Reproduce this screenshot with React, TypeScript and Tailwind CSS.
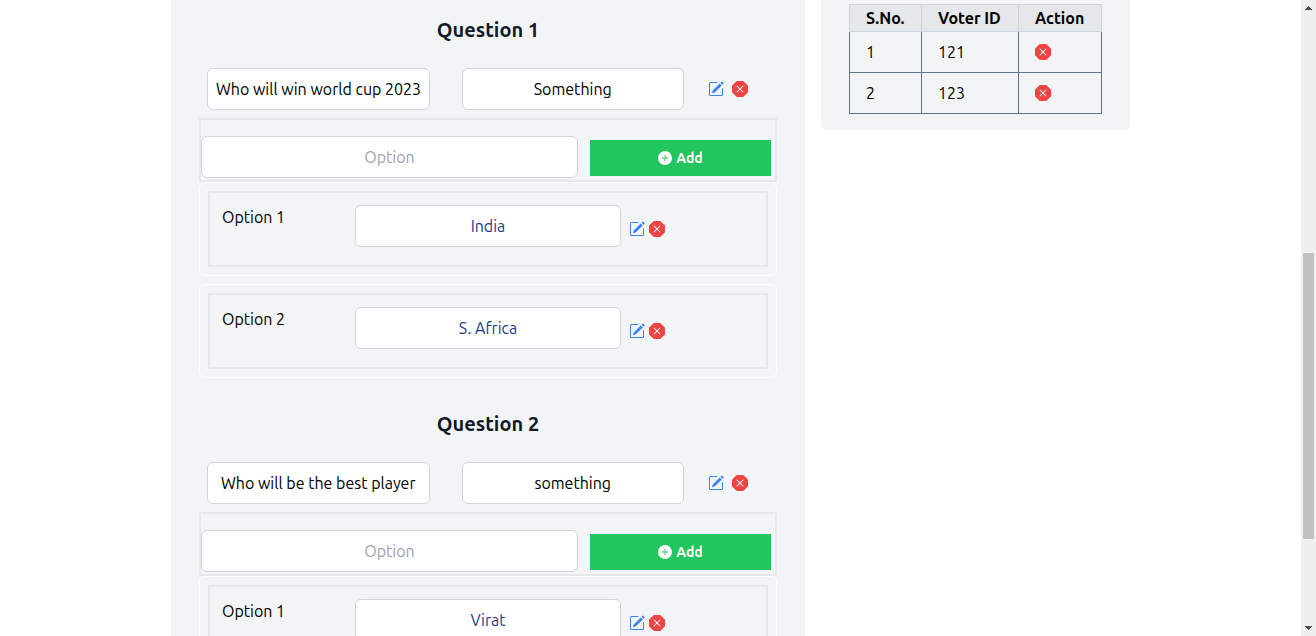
import React from "react";
import { BsPencilSquare, BsPlusCircleFill, BsXOctagonFill } from "react-icons/bs";

type Question = {
  title: string;
  description: string;
  options: string[];
};

const questions: Question[] = [
  {
    title: "Who will win world cup 2023",
    description: "Something",
    options: ["India", "S. Africa"],
  },
  {
    title: "Who will be the best player",
    description: "something",
    options: ["Virat"],
  },
];

const voters = ["121", "123"];

const fieldClass =
  "block w-full min-w-0 rounded-md border border-[#d1d5db] bg-white p-2 text-center leading-6 placeholder:text-[#9ca3af]";

function EditButton() {
  return (
    <button type="button" aria-label="Edit" className="text-[#3b82f6]">
      <BsPencilSquare className="size-4" />
    </button>
  );
}

function DeleteButton() {
  return (
    <button type="button" aria-label="Delete" className="block text-[#ef4444]">
      <BsXOctagonFill className="size-4" />
    </button>
  );
}

function OptionCard({ label, value, id }: { label: string; value: string; id: string }) {
  return (
    <div className="rounded-md border border-white p-2">
      <div className="grid grid-cols-4 border-2 border-[#e5e7eb] p-3">
        <label htmlFor={id} className="leading-6">
          {label}
        </label>
        <div className="col-span-2 h-12">
          <input id={id} defaultValue={value} className={`${fieldClass} text-[#1e3a8a]`} />
        </div>
        <div className="flex items-start gap-1 pt-4 pl-2">
          <EditButton />
          <DeleteButton />
        </div>
      </div>
    </div>
  );
}

function QuestionSection({ question, number }: { question: Question; number: number }) {
  return (
    <section className="py-4">
      <h2 className="text-center text-xl leading-7 font-bold text-[#111827]">Question {number}</h2>
      <div className="mt-6 flex items-center px-2">
        <div className="flex flex-1 gap-8">
          <input aria-label="Question title" defaultValue={question.title} className={fieldClass} />
          <input aria-label="Question description" defaultValue={question.description} className={fieldClass} />
        </div>
        <div className="flex w-[85px] items-center gap-2 pl-6">
          <EditButton />
          <DeleteButton />
        </div>
      </div>
      <form className="mt-2 flex items-end gap-3 border-2 border-[#e5e7eb] pt-4 pr-1 pb-0.5">
        <input aria-label="Option" placeholder="Option" className={fieldClass} />
        <button
          type="button"
          className="mb-0.5 flex h-9 w-[181px] shrink-0 items-center justify-center gap-1 bg-[#22c55e] text-sm font-bold text-white"
        >
          <BsPlusCircleFill className="size-3.5" />
          Add
        </button>
      </form>
      <div className="flex flex-col gap-2">
        {question.options.map((option, i) => (
          <OptionCard key={option} id={`question-${number}-option-${i + 1}`} label={`Option ${i + 1}`} value={option} />
        ))}
      </div>
    </section>
  );
}

function VoterTable() {
  return (
    <table className="w-full border-collapse text-left leading-6">
      <thead>
        <tr className="h-[27px] bg-[#e5e7eb]">
          <th className="w-[72px] border border-[#cbd5e1] px-4 font-bold">S.No.</th>
          <th className="border border-[#cbd5e1] px-4 font-bold">Voter ID</th>
          <th className="w-[83px] border border-[#cbd5e1] px-4 font-bold">Action</th>
        </tr>
      </thead>
      <tbody>
        {voters.map((voter, i) => (
          <tr key={voter} className="h-[41px]">
            <td className="border border-[#64748b] px-4">{i + 1}</td>
            <td className="border border-[#64748b] px-4">{voter}</td>
            <td className="border border-[#64748b] px-4">
              <DeleteButton />
            </td>
          </tr>
        ))}
      </tbody>
    </table>
  );
}

function ScrollTrack() {
  return (
    <div aria-hidden="true" className="flex w-[15px] shrink-0 flex-col items-center bg-[#f0f0f0]">
      <svg viewBox="0 0 15 15" className="size-[15px]" fill="#505050" shapeRendering="crispEdges">
        <path d="M7 6h1v1h1v1h1v1h1v1H4V9h1V8h1V7h1z" />
      </svg>
      <div className="flex w-[11px] flex-1 flex-col">
        <div className="grow-[238]" />
        <div className="grow-[286] bg-[#c1c1c1]" />
        <div className="grow-[82]" />
      </div>
      <svg viewBox="0 0 15 15" className="size-[15px]" fill="#505050" shapeRendering="crispEdges">
        <path d="M4 5h7v1h-1v1H9v1H8v1H7V8H6V7H5V6H4z" />
      </svg>
    </div>
  );
}

export default function App() {
  return (
    <div className="flex h-screen overflow-hidden bg-white font-['Ubuntu','Noto_Sans',sans-serif] text-base text-black">
      <div className="flex-1">
        <main className="mx-auto grid max-w-[959px] grid-cols-3 items-start gap-4">
          <div className="col-span-2 bg-[#f3f4f6] px-7">
            {questions.map((question, i) => (
              <QuestionSection key={question.title} question={question} number={i + 1} />
            ))}
          </div>
          <aside className="rounded-b-md bg-[#f3f4f6] px-7 pt-1 pb-4">
            <VoterTable />
          </aside>
        </main>
      </div>
      <ScrollTrack />
    </div>
  );
}
